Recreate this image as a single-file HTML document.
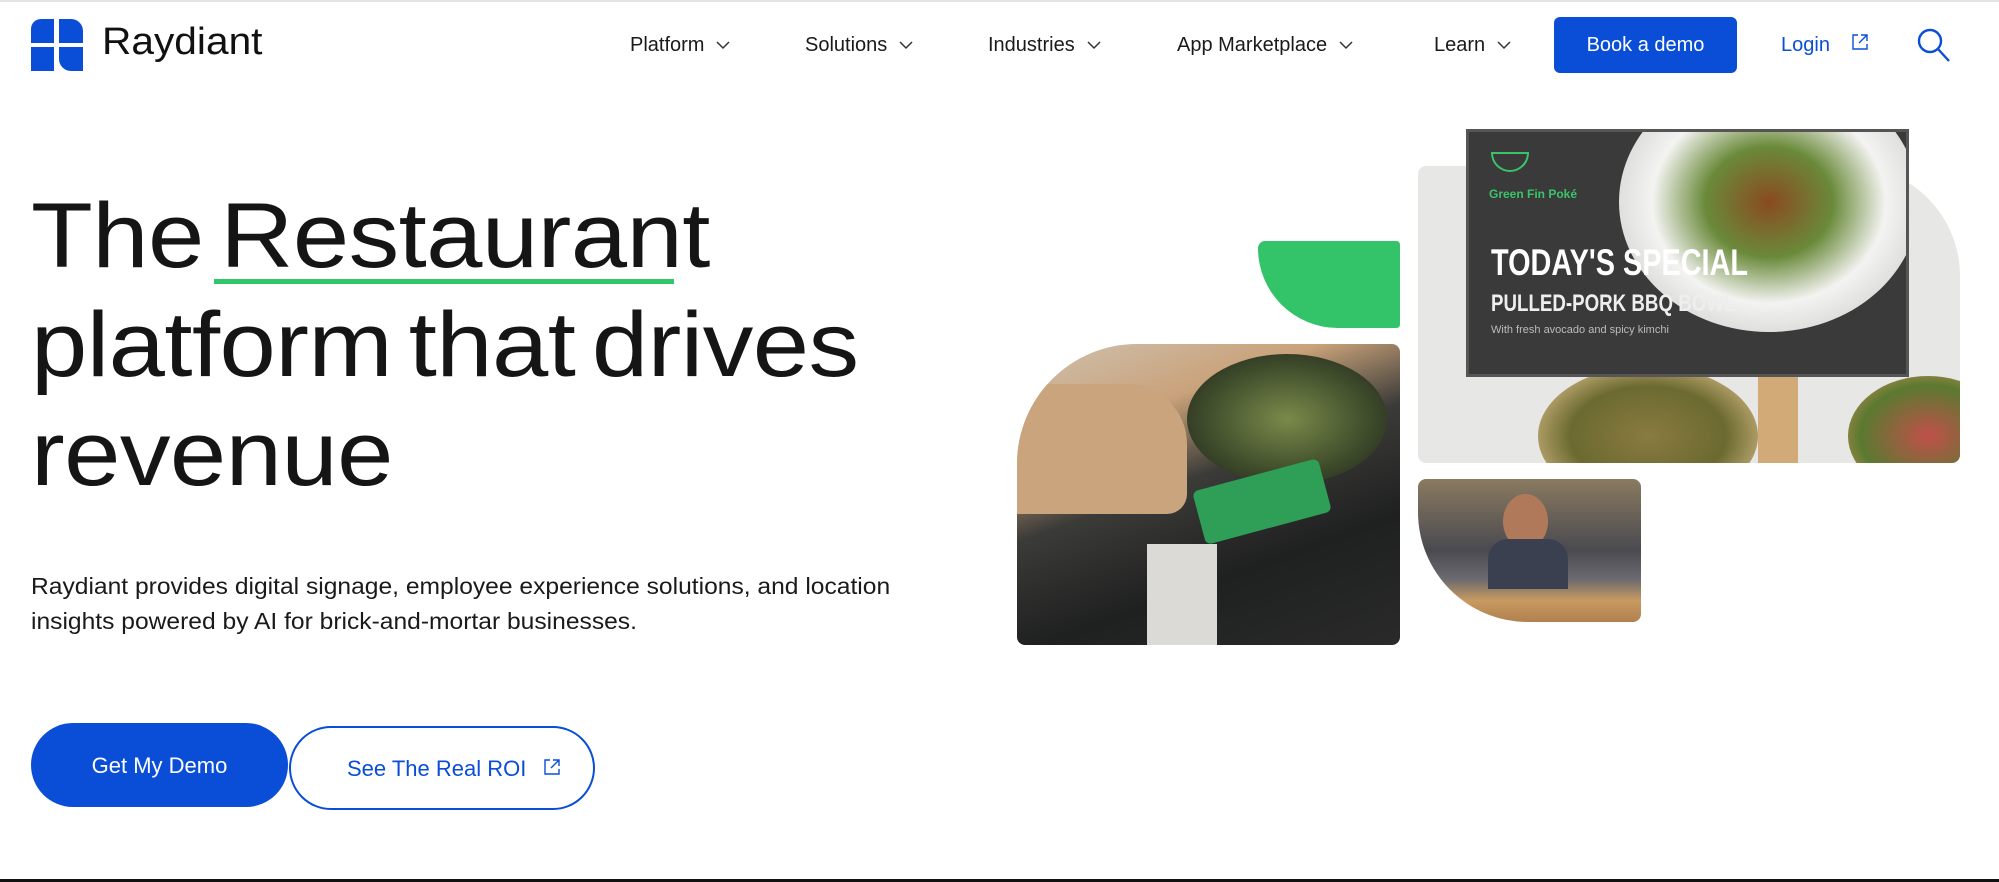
<!DOCTYPE html>
<html><head><meta charset="utf-8"><style>
*{margin:0;padding:0;box-sizing:border-box}
body{width:1999px;height:882px;position:relative;overflow:hidden;background:#fff;font-family:"Liberation Sans",sans-serif;color:#111}
.abs{position:absolute}
.nav{position:absolute;top:34px;font-size:20px;color:#1a1a1a;white-space:nowrap}
.nav svg{margin-left:12px;vertical-align:middle}
h1{position:absolute;left:31px;top:182px;font-size:92px;font-weight:400;line-height:109px;letter-spacing:-0.5px;word-spacing:-10px;color:#151515;white-space:nowrap;transform:scaleX(1.1);transform-origin:left}
</style></head><body>
<div class="abs" style="left:0;top:0;width:1999px;height:2px;background:#e2e4e6"></div>
<div class="abs" style="left:0;top:879px;width:1999px;height:3px;background:#111"></div>

<svg class="abs" style="left:31px;top:19px" width="52" height="52" viewBox="0 0 52 52">
<path d="M0 24V10A10 10 0 0 1 10 0H23V24Z" fill="#0a4ed8"/>
<path d="M28 0H40A12 12 0 0 1 52 12V24H28Z" fill="#0a4ed8"/>
<path d="M0 28H23V52H0Z" fill="#0a4ed8"/>
<path d="M28 28H52V52H40A12 12 0 0 1 28 40Z" fill="#0a4ed8"/>
</svg>
<div class="abs" style="left:102px;top:21px;font-size:38px;color:#111;transform:scaleX(1.07);transform-origin:left">Raydiant</div>

<div class="nav" style="left:630px">Platform<svg width="14" height="9" viewBox="0 0 14 9"><path d="M1 1l6 6 6-6" fill="none" stroke="#333" stroke-width="1.5"/></svg></div>
<div class="nav" style="left:805px">Solutions<svg width="14" height="9" viewBox="0 0 14 9"><path d="M1 1l6 6 6-6" fill="none" stroke="#333" stroke-width="1.5"/></svg></div>
<div class="nav" style="left:988px">Industries<svg width="14" height="9" viewBox="0 0 14 9"><path d="M1 1l6 6 6-6" fill="none" stroke="#333" stroke-width="1.5"/></svg></div>
<div class="nav" style="left:1177px">App Marketplace<svg width="14" height="9" viewBox="0 0 14 9"><path d="M1 1l6 6 6-6" fill="none" stroke="#333" stroke-width="1.5"/></svg></div>
<div class="nav" style="left:1434px">Learn<svg width="14" height="9" viewBox="0 0 14 9"><path d="M1 1l6 6 6-6" fill="none" stroke="#333" stroke-width="1.5"/></svg></div>

<div class="abs" style="left:1554px;top:17px;width:183px;height:56px;background:#0a4ed8;border-radius:6px;color:#fff;font-size:20px;text-align:center;line-height:56px">Book a demo</div>
<div class="abs" style="left:1781px;top:34px;font-size:20px;color:#0a4ed8">Login</div>
<svg class="abs" style="left:1851px;top:33px" width="18" height="18" viewBox="0 0 18 18"><path d="M7 2H2v14h14v-5M10 2h6v6M16 2L8 10" fill="none" stroke="#0a4ed8" stroke-width="1.4"/></svg>
<svg class="abs" style="left:1914px;top:27px" width="40" height="36" viewBox="0 0 40 36"><circle cx="16" cy="14" r="11" fill="none" stroke="#0a4ed8" stroke-width="2.4"/><path d="M24 22l11 12" stroke="#0a4ed8" stroke-width="2.4"/></svg>

<h1>The Restaurant<br>platform that drives<br>revenue</h1>
<div class="abs" style="left:214px;top:279px;width:460px;height:5px;background:#2fc76a"></div>

<div class="abs" style="left:31px;top:569px;font-size:23px;line-height:35px;color:#1a1a1a;transform:scaleX(1.07);transform-origin:left;white-space:nowrap">Raydiant provides digital signage, employee experience solutions, and location<br>insights powered by AI for brick-and-mortar businesses.</div>

<div class="abs" style="left:31px;top:723px;width:257px;height:84px;background:#0a4ed8;border-radius:42px;color:#fff;font-size:22px;text-align:center;line-height:86px">Get My Demo</div>
<div class="abs" style="left:289px;top:726px;width:306px;height:84px;border:2px solid #0a4ed8;border-radius:42px;color:#0a4ed8;font-size:22px;line-height:82px;padding-left:56px">See The Real ROI</div>
<svg class="abs" style="left:543px;top:758px" width="18" height="18" viewBox="0 0 18 18"><path d="M7 2H2v14h14v-5M10 2h6v6M16 2L8 10" fill="none" stroke="#0a4ed8" stroke-width="1.4"/></svg>

<div class="abs" style="left:1258px;top:241px;width:142px;height:87px;background:#33c46a;border-radius:8px 4px 4px 90px"></div>
<div class="abs" style="left:1017px;top:344px;width:383px;height:301px;border-radius:120px 8px 8px 8px;overflow:hidden;background:linear-gradient(160deg,#cfc2b0 0%,#c9a27a 25%,#3b3b38 45%,#1f2020 70%,#2a2a2a 100%)">
<div class="abs" style="left:170px;top:10px;width:200px;height:130px;border-radius:50%;background:radial-gradient(#7a8a4a,#3d4a2a 60%,#1e1e1e)"></div>
<div class="abs" style="left:180px;top:130px;width:130px;height:55px;background:#2f9f58;transform:rotate(-15deg);border-radius:6px"></div>
<div class="abs" style="left:0;top:40px;width:170px;height:130px;background:#c9a47c;border-radius:0 60px 20px 0"></div>
<div class="abs" style="left:130px;top:200px;width:70px;height:101px;background:#dcdad6"></div>
</div>
<div class="abs" style="left:1418px;top:166px;width:542px;height:297px;border-radius:8px 110px 8px 8px;overflow:hidden;background:#e7e7e5">
<div class="abs" style="left:120px;top:200px;width:220px;height:140px;border-radius:50%;background:radial-gradient(#8a7a40,#6b6a30 50%,#c8b07a 80%)"></div>
<div class="abs" style="left:430px;top:210px;width:160px;height:120px;border-radius:50%;background:radial-gradient(#c0504a,#5a7a30 60%,#b88a50 85%)"></div>
<div class="abs" style="left:340px;top:200px;width:40px;height:100px;background:#d2aa78"></div>
</div>
<div class="abs" style="left:1466px;top:129px;width:443px;height:248px;background:#3a3a3a;border:3px solid #555;overflow:hidden">
<div class="abs" style="left:150px;top:-60px;width:300px;height:260px;border-radius:50%;background:radial-gradient(#8a4a20 0%,#6a8a3a 30%,#f3f3f1 55%,#e0e0de 70%)"></div>
<div class="abs" style="left:20px;top:55px;font-size:12px;color:#3ac46a;font-weight:bold">Green Fin Poké</div>
<div class="abs" style="left:22px;top:20px;width:38px;height:20px;border:2px solid #3ac46a;border-radius:0 0 20px 20px"></div>
<div class="abs" style="left:22px;top:110px;font-size:37px;color:#fff;font-weight:bold;transform:scaleX(0.78);transform-origin:left;white-space:nowrap">TODAY'S SPECIAL</div>
<div class="abs" style="left:22px;top:158px;font-size:24px;color:#eee;font-weight:bold;transform:scaleX(0.78);transform-origin:left;white-space:nowrap">PULLED-PORK BBQ BOWL</div>
<div class="abs" style="left:22px;top:192px;font-size:11px;color:#bbb">With fresh avocado and spicy kimchi</div>
</div>
<div class="abs" style="left:1418px;top:479px;width:223px;height:143px;border-radius:8px 8px 8px 110px;overflow:hidden;background:linear-gradient(180deg,#8a7a60 0%,#4a4a50 50%,#6a6a70 70%,#c89a60 85%,#b08050 100%)">
<div class="abs" style="left:85px;top:15px;width:45px;height:55px;border-radius:50%;background:#b07a5a"></div>
<div class="abs" style="left:70px;top:60px;width:80px;height:50px;background:#3a4050;border-radius:20px 20px 0 0"></div>
</div>
</body></html>
